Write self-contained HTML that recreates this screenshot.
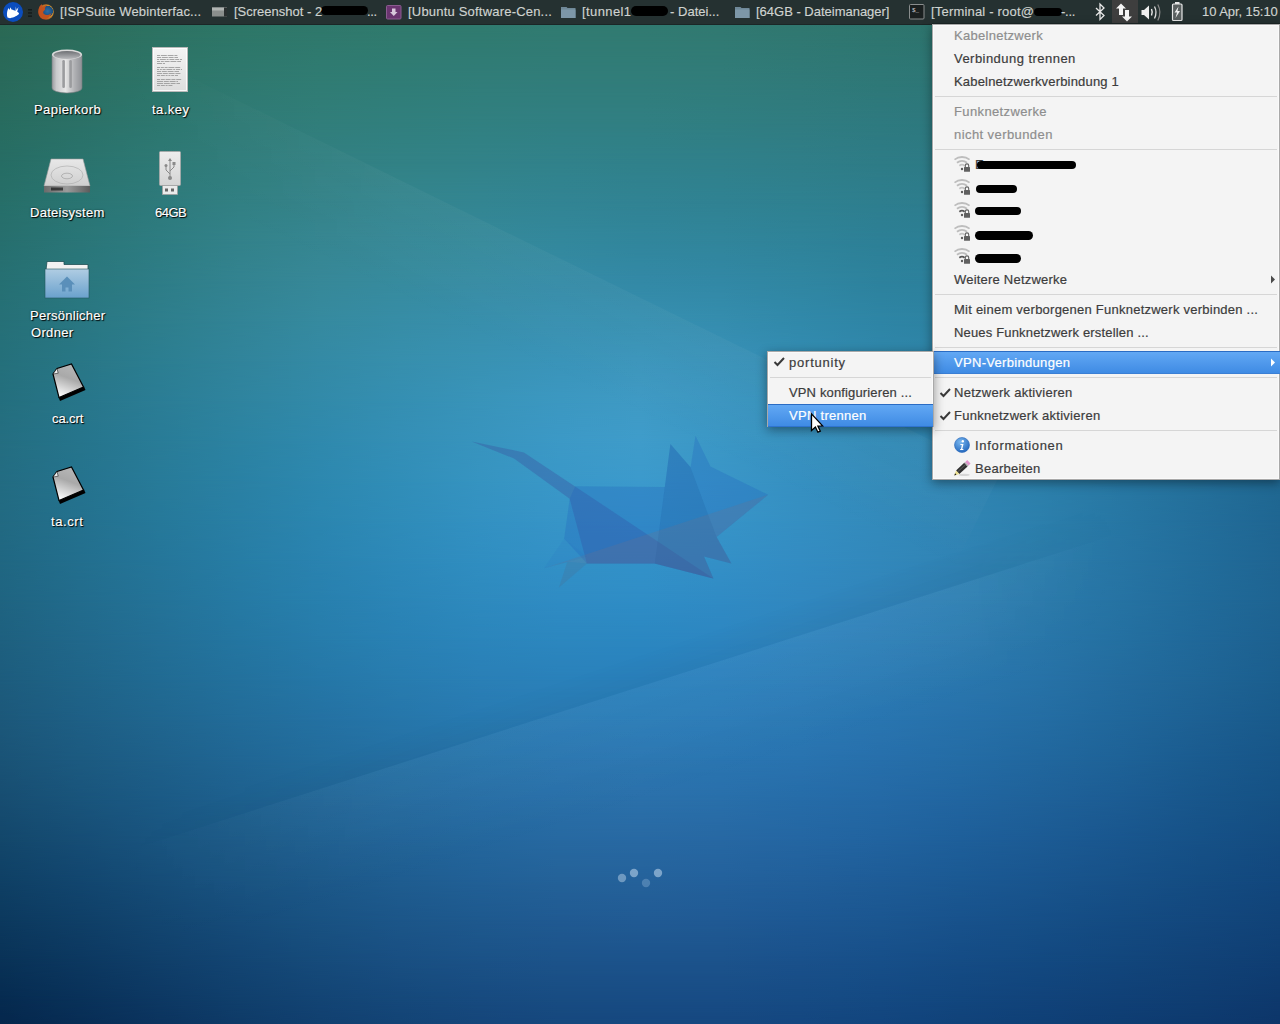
<!DOCTYPE html>
<html><head><meta charset="utf-8"><style>*{margin:0;padding:0;box-sizing:border-box}
html,body{width:1280px;height:1024px;overflow:hidden;background:#1e5f90;font-family:"Liberation Sans",sans-serif}
.s{position:absolute;left:0;width:1280px;height:40px}
.m{-webkit-mask-image:linear-gradient(to bottom,transparent,#000);mask-image:linear-gradient(to bottom,transparent,#000)}
.a{position:absolute}
#panel{position:absolute;left:0;top:0;width:1280px;height:25px;background:#253131;border-bottom:1px solid #1b2626}
.pt{position:absolute;top:0;height:24px;line-height:24px;font-size:13px;color:#cfd3d0;white-space:nowrap;-webkit-text-stroke:0.15px currentColor}
.menu{position:absolute;background:#f4f4f4;border:1px solid #a9a9a9;box-shadow:inset 1px 1px 0 #fafafa, inset -1px -1px 0 #fafafa}
.mi{position:absolute;height:23px;line-height:23px;font-size:13px;color:#3c3c3c;white-space:nowrap;-webkit-text-stroke:0.2px currentColor}
.dis{color:#8e8e8e}
.sep{position:absolute;height:1px;background:#d6d6d6}
.hl{position:absolute;background:linear-gradient(#62a8f4,#3f8be4);border-top:1px solid #2a6cc4;border-bottom:1px solid #3b7fd4}
.lbl{position:absolute;font-size:13px;line-height:17px;color:#fff;-webkit-text-stroke:0.15px #fff;text-shadow:1px 1px 1px #000,0 0 2px rgba(0,0,0,.6);white-space:nowrap}
</style></head><body>
<div class="s" style="top:0px;background:linear-gradient(to right,#2b6852 0px,#2c6c58 80px,#2d715e 160px,#2e7563 240px,#2f7767 320px,#2f7969 400px,#30796b 480px,#317a6c 560px,#31796c 640px,#31786c 720px,#30766b 800px,#2f746a 880px,#2e7268 960px,#2d7167 1040px,#2d7066 1120px,#2d6e65 1200px,#2c6c64 1280px)"></div>
<div class="s m" style="top:0px;background:linear-gradient(to right,#2a6956 0px,#2c6e5d 80px,#2d7364 160px,#2e7769 240px,#2f796d 320px,#307b6f 400px,#307b71 480px,#317b73 560px,#317b73 640px,#317a73 720px,#307872 800px,#2e7670 880px,#2d746f 960px,#2d736d 1040px,#2d726c 1120px,#2c706b 1200px,#2c6d6a 1280px)"></div>
<div class="s" style="top:40px;background:linear-gradient(to right,#2a6956 0px,#2c6e5d 80px,#2d7364 160px,#2e7769 240px,#2f796d 320px,#307b6f 400px,#307b71 480px,#317b73 560px,#317b73 640px,#317a73 720px,#307872 800px,#2e7670 880px,#2d746f 960px,#2d736d 1040px,#2d726c 1120px,#2c706b 1200px,#2c6d6a 1280px)"></div>
<div class="s m" style="top:40px;background:linear-gradient(to right,#296a5b 0px,#2b7062 80px,#2d7569 160px,#2f796f 240px,#307c73 320px,#307d76 400px,#317d79 480px,#317d7a 560px,#317d7a 640px,#317c7a 720px,#307a79 800px,#2e7877 880px,#2d7676 960px,#2d7574 1040px,#2d7373 1120px,#2c7171 1200px,#2c6f6f 1280px)"></div>
<div class="s" style="top:80px;background:linear-gradient(to right,#296a5b 0px,#2b7062 80px,#2d7569 160px,#2f796f 240px,#307c73 320px,#307d76 400px,#317d79 480px,#317d7a 560px,#317d7a 640px,#317c7a 720px,#307a79 800px,#2e7877 880px,#2d7676 960px,#2d7574 1040px,#2d7373 1120px,#2c7171 1200px,#2c6f6f 1280px)"></div>
<div class="s m" style="top:80px;background:linear-gradient(to right,#286c5f 0px,#2b7167 80px,#2d776f 160px,#307b76 240px,#317e7a 320px,#317f7d 400px,#318080 480px,#317f82 560px,#317f82 640px,#307e81 720px,#307c80 800px,#2e7a7f 880px,#2d787d 960px,#2d777c 1040px,#2c757a 1120px,#2c7378 1200px,#2b7075 1280px)"></div>
<div class="s" style="top:120px;background:linear-gradient(to right,#286c5f 0px,#2b7167 80px,#2d776f 160px,#307b76 240px,#317e7a 320px,#317f7d 400px,#318080 480px,#317f82 560px,#317f82 640px,#307e81 720px,#307c80 800px,#2e7a7f 880px,#2d787d 960px,#2d777c 1040px,#2c757a 1120px,#2c7378 1200px,#2b7075 1280px)"></div>
<div class="s m" style="top:120px;background:linear-gradient(to right,#276d64 0px,#2a736d 80px,#2e7975 160px,#317d7c 240px,#328082 320px,#328285 400px,#328288 480px,#31828a 560px,#30818a 640px,#30808a 720px,#307e88 800px,#2e7c86 880px,#2d7a85 960px,#2c7983 1040px,#2c7781 1120px,#2c757f 1200px,#2b717b 1280px)"></div>
<div class="s" style="top:160px;background:linear-gradient(to right,#276d64 0px,#2a736d 80px,#2e7975 160px,#317d7c 240px,#328082 320px,#328285 400px,#328288 480px,#31828a 560px,#30818a 640px,#30808a 720px,#307e88 800px,#2e7c86 880px,#2d7a85 960px,#2c7983 1040px,#2c7781 1120px,#2c757f 1200px,#2b717b 1280px)"></div>
<div class="s m" style="top:160px;background:linear-gradient(to right,#276f69 0px,#2a7572 80px,#2e7a7b 160px,#328083 240px,#348389 320px,#34858e 400px,#338591 480px,#328493 560px,#318393 640px,#308292 720px,#2f8190 800px,#2e7e8e 880px,#2d7c8c 960px,#2c7b8a 1040px,#2c7988 1120px,#2b7685 1200px,#2a7281 1280px)"></div>
<div class="s" style="top:200px;background:linear-gradient(to right,#276f69 0px,#2a7572 80px,#2e7a7b 160px,#328083 240px,#348389 320px,#34858e 400px,#338591 480px,#328493 560px,#318393 640px,#308292 720px,#2f8190 800px,#2e7e8e 880px,#2d7c8c 960px,#2c7b8a 1040px,#2c7988 1120px,#2b7685 1200px,#2a7281 1280px)"></div>
<div class="s m" style="top:200px;background:linear-gradient(to right,#276f6e 0px,#2a7678 80px,#2e7c81 160px,#33828a 240px,#368691 320px,#368896 400px,#35899a 480px,#33889c 560px,#31869c 640px,#31859b 720px,#2f8399 800px,#2d8096 880px,#2c7e94 960px,#2c7c91 1040px,#2b7a8f 1120px,#2b778a 1200px,#2a7385 1280px)"></div>
<div class="s" style="top:240px;background:linear-gradient(to right,#276f6e 0px,#2a7678 80px,#2e7c81 160px,#33828a 240px,#368691 320px,#368896 400px,#35899a 480px,#33889c 560px,#31869c 640px,#31859b 720px,#2f8399 800px,#2d8096 880px,#2c7e94 960px,#2c7c91 1040px,#2b7a8f 1120px,#2b778a 1200px,#2a7385 1280px)"></div>
<div class="s m" style="top:240px;background:linear-gradient(to right,#267073 0px,#2a777d 80px,#2e7d87 160px,#338390 240px,#378898 320px,#378b9e 400px,#378ca3 480px,#358ba6 560px,#3389a6 640px,#3288a5 720px,#3086a1 800px,#2d829d 880px,#2c809b 960px,#2c7e98 1040px,#2b7b94 1120px,#2a778f 1200px,#297289 1280px)"></div>
<div class="s" style="top:280px;background:linear-gradient(to right,#267073 0px,#2a777d 80px,#2e7d87 160px,#338390 240px,#378898 320px,#378b9e 400px,#378ca3 480px,#358ba6 560px,#3389a6 640px,#3288a5 720px,#3086a1 800px,#2d829d 880px,#2c809b 960px,#2c7e98 1040px,#2b7b94 1120px,#2a778f 1200px,#297289 1280px)"></div>
<div class="s m" style="top:280px;background:linear-gradient(to right,#267077 0px,#297782 80px,#2e7e8c 160px,#328496 240px,#368a9f 320px,#378da6 400px,#388fac 480px,#3890b0 560px,#368fb0 640px,#358dae 720px,#3189aa 800px,#2e85a5 880px,#2d82a1 960px,#2c7f9d 1040px,#2a7b99 1120px,#297692 1200px,#27718b 1280px)"></div>
<div class="s" style="top:320px;background:linear-gradient(to right,#267077 0px,#297782 80px,#2e7e8c 160px,#328496 240px,#368a9f 320px,#378da6 400px,#388fac 480px,#3890b0 560px,#368fb0 640px,#358dae 720px,#3189aa 800px,#2e85a5 880px,#2d82a1 960px,#2c7f9d 1040px,#2a7b99 1120px,#297692 1200px,#27718b 1280px)"></div>
<div class="s m" style="top:320px;background:linear-gradient(to right,#25707b 0px,#297786 80px,#2c7e91 160px,#31849b 240px,#348aa5 320px,#378fad 400px,#3992b3 480px,#3a94b9 560px,#3b95bb 640px,#3891b8 720px,#338cb2 800px,#3087ac 880px,#2e83a7 960px,#2c80a2 1040px,#2a7b9c 1120px,#277595 1200px,#256f8d 1280px)"></div>
<div class="s" style="top:360px;background:linear-gradient(to right,#25707b 0px,#297786 80px,#2c7e91 160px,#31849b 240px,#348aa5 320px,#378fad 400px,#3992b3 480px,#3a94b9 560px,#3b95bb 640px,#3891b8 720px,#338cb2 800px,#3087ac 880px,#2e83a7 960px,#2c80a2 1040px,#2a7b9c 1120px,#277595 1200px,#256f8d 1280px)"></div>
<div class="s m" style="top:360px;background:linear-gradient(to right,#246f7e 0px,#28768a 80px,#2b7d95 160px,#2f849f 240px,#328aa9 320px,#358fb2 400px,#3994ba 480px,#3c98c1 560px,#3f9ac4 640px,#3a95c0 720px,#358fb8 800px,#3189b2 880px,#2e85ac 960px,#2c80a6 1040px,#297a9f 1120px,#267397 1200px,#236c8e 1280px)"></div>
<div class="s" style="top:400px;background:linear-gradient(to right,#246f7e 0px,#28768a 80px,#2b7d95 160px,#2f849f 240px,#328aa9 320px,#358fb2 400px,#3994ba 480px,#3c98c1 560px,#3f9ac4 640px,#3a95c0 720px,#358fb8 800px,#3189b2 880px,#2e85ac 960px,#2c80a6 1040px,#297a9f 1120px,#267397 1200px,#236c8e 1280px)"></div>
<div class="s m" style="top:400px;background:linear-gradient(to right,#246e81 0px,#26758c 80px,#297c97 160px,#2c83a2 240px,#2f89ad 320px,#348fb6 400px,#3894be 480px,#3c99c6 560px,#3f9cca 640px,#3b97c5 720px,#3690be 800px,#328ab6 880px,#2f85af 960px,#2c80a9 1040px,#2879a1 1120px,#257198 1200px,#226a90 1280px)"></div>
<div class="s" style="top:440px;background:linear-gradient(to right,#246e81 0px,#26758c 80px,#297c97 160px,#2c83a2 240px,#2f89ad 320px,#348fb6 400px,#3894be 480px,#3c99c6 560px,#3f9cca 640px,#3b97c5 720px,#3690be 800px,#328ab6 880px,#2f85af 960px,#2c80a9 1040px,#2879a1 1120px,#257198 1200px,#226a90 1280px)"></div>
<div class="s m" style="top:440px;background:linear-gradient(to right,#236c82 0px,#25738e 80px,#287b99 160px,#2a81a4 240px,#2d88af 320px,#318eb8 400px,#3694c1 480px,#3a98c8 560px,#3c9acc 640px,#3a96c8 720px,#3690c1 800px,#338bb9 880px,#3085b2 960px,#2c80ab 1040px,#2878a3 1120px,#24709a 1200px,#206891 1280px)"></div>
<div class="s" style="top:480px;background:linear-gradient(to right,#236c82 0px,#25738e 80px,#287b99 160px,#2a81a4 240px,#2d88af 320px,#318eb8 400px,#3694c1 480px,#3a98c8 560px,#3c9acc 640px,#3a96c8 720px,#3690c1 800px,#338bb9 880px,#3085b2 960px,#2c80ab 1040px,#2878a3 1120px,#24709a 1200px,#206891 1280px)"></div>
<div class="s m" style="top:480px;background:linear-gradient(to right,#226a82 0px,#24718e 80px,#26799a 160px,#297fa5 240px,#2b86b0 320px,#2f8cb9 400px,#3391c2 480px,#3795c8 560px,#3897cb 640px,#3794c8 720px,#358fc2 800px,#338abb 880px,#3085b4 960px,#2c7fac 1040px,#2777a4 1120px,#236e9b 1200px,#1f6692 1280px)"></div>
<div class="s" style="top:520px;background:linear-gradient(to right,#226a82 0px,#24718e 80px,#26799a 160px,#297fa5 240px,#2b86b0 320px,#2f8cb9 400px,#3391c2 480px,#3795c8 560px,#3897cb 640px,#3794c8 720px,#358fc2 800px,#338abb 880px,#3085b4 960px,#2c7fac 1040px,#2777a4 1120px,#236e9b 1200px,#1f6692 1280px)"></div>
<div class="s m" style="top:520px;background:linear-gradient(to right,#206782 0px,#236f8e 80px,#25769a 160px,#277da5 240px,#2a83b0 320px,#2d89b9 400px,#308ec1 480px,#3391c7 560px,#3392c9 640px,#3490c7 720px,#338cc2 800px,#3288bb 880px,#3083b4 960px,#2c7dac 1040px,#2775a4 1120px,#226d9b 1200px,#1f6592 1280px)"></div>
<div class="s" style="top:560px;background:linear-gradient(to right,#206782 0px,#236f8e 80px,#25769a 160px,#277da5 240px,#2a83b0 320px,#2d89b9 400px,#308ec1 480px,#3391c7 560px,#3392c9 640px,#3490c7 720px,#338cc2 800px,#3288bb 880px,#3083b4 960px,#2c7dac 1040px,#2775a4 1120px,#226d9b 1200px,#1f6592 1280px)"></div>
<div class="s m" style="top:560px;background:linear-gradient(to right,#1f6481 0px,#226c8d 80px,#247398 160px,#267aa4 240px,#2880ae 320px,#2b85b7 400px,#2e8abe 480px,#2f8cc4 560px,#2f8dc6 640px,#308bc4 720px,#3188c0 800px,#3184ba 880px,#2f80b3 960px,#2b7aab 1040px,#2673a3 1120px,#216b9a 1200px,#1e6492 1280px)"></div>
<div class="s" style="top:600px;background:linear-gradient(to right,#1f6481 0px,#226c8d 80px,#247398 160px,#267aa4 240px,#2880ae 320px,#2b85b7 400px,#2e8abe 480px,#2f8cc4 560px,#2f8dc6 640px,#308bc4 720px,#3188c0 800px,#3184ba 880px,#2f80b3 960px,#2b7aab 1040px,#2673a3 1120px,#216b9a 1200px,#1e6492 1280px)"></div>
<div class="s m" style="top:600px;background:linear-gradient(to right,#1e607f 0px,#21688b 80px,#236f96 160px,#2476a1 240px,#277cab 320px,#2981b4 400px,#2b85bb 480px,#2c87bf 560px,#2b87c1 640px,#2d86c1 720px,#2f84bd 800px,#2f80b8 880px,#2d7cb1 960px,#2976a9 1040px,#2470a1 1120px,#206899 1200px,#1d6190 1280px)"></div>
<div class="s" style="top:640px;background:linear-gradient(to right,#1e607f 0px,#21688b 80px,#236f96 160px,#2476a1 240px,#277cab 320px,#2981b4 400px,#2b85bb 480px,#2c87bf 560px,#2b87c1 640px,#2d86c1 720px,#2f84bd 800px,#2f80b8 880px,#2d7cb1 960px,#2976a9 1040px,#2470a1 1120px,#206899 1200px,#1d6190 1280px)"></div>
<div class="s m" style="top:640px;background:linear-gradient(to right,#1d5c7d 0px,#1f6488 80px,#216b93 160px,#23719d 240px,#2577a7 320px,#287caf 400px,#2a7fb6 480px,#2a81ba 560px,#2a81bc 640px,#2c80bc 720px,#2d7eb9 800px,#2c7bb4 880px,#2a77ae 960px,#2772a7 1040px,#236b9e 1120px,#1f6596 1200px,#1b5e8e 1280px)"></div>
<div class="s" style="top:680px;background:linear-gradient(to right,#1d5c7d 0px,#1f6488 80px,#216b93 160px,#23719d 240px,#2577a7 320px,#287caf 400px,#2a7fb6 480px,#2a81ba 560px,#2a81bc 640px,#2c80bc 720px,#2d7eb9 800px,#2c7bb4 880px,#2a77ae 960px,#2772a7 1040px,#236b9e 1120px,#1f6596 1200px,#1b5e8e 1280px)"></div>
<div class="s m" style="top:680px;background:linear-gradient(to right,#1c587a 0px,#1e5f85 80px,#20668f 160px,#226c99 240px,#2471a2 320px,#2676aa 400px,#287ab1 480px,#2a7bb5 560px,#2a7cb7 640px,#2b7bb7 720px,#2b79b4 800px,#2975b0 880px,#2771aa 960px,#246da3 1040px,#20679b 1120px,#1d6093 1200px,#195a8b 1280px)"></div>
<div class="s" style="top:720px;background:linear-gradient(to right,#1c587a 0px,#1e5f85 80px,#20668f 160px,#226c99 240px,#2471a2 320px,#2676aa 400px,#287ab1 480px,#2a7bb5 560px,#2a7cb7 640px,#2b7bb7 720px,#2b79b4 800px,#2975b0 880px,#2771aa 960px,#246da3 1040px,#20679b 1120px,#1d6093 1200px,#195a8b 1280px)"></div>
<div class="s m" style="top:720px;background:linear-gradient(to right,#1a5376 0px,#1c5a80 80px,#1e608a 160px,#206694 240px,#226c9c 320px,#2570a4 400px,#2774aa 480px,#2975af 560px,#2b76b1 640px,#2a75b1 720px,#2973af 800px,#276fab 880px,#246ca5 960px,#21679e 1040px,#1e6297 1120px,#1a5b8f 1200px,#175588 1280px)"></div>
<div class="s" style="top:760px;background:linear-gradient(to right,#1a5376 0px,#1c5a80 80px,#1e608a 160px,#206694 240px,#226c9c 320px,#2570a4 400px,#2774aa 480px,#2975af 560px,#2b76b1 640px,#2a75b1 720px,#2973af 800px,#276fab 880px,#246ca5 960px,#21679e 1040px,#1e6297 1120px,#1a5b8f 1200px,#175588 1280px)"></div>
<div class="s m" style="top:760px;background:linear-gradient(to right,#174d71 0px,#19547b 80px,#1b5a85 160px,#1e608e 240px,#216596 320px,#236a9e 400px,#266da4 480px,#296fa8 560px,#2b70aa 640px,#296faa 720px,#266ca8 800px,#2469a5 880px,#2165a0 960px,#1f6199 1040px,#1c5c93 1120px,#18568b 1200px,#155184 1280px)"></div>
<div class="s" style="top:800px;background:linear-gradient(to right,#174d71 0px,#19547b 80px,#1b5a85 160px,#1e608e 240px,#216596 320px,#236a9e 400px,#266da4 480px,#296fa8 560px,#2b70aa 640px,#296faa 720px,#266ca8 800px,#2469a5 880px,#2165a0 960px,#1f6199 1040px,#1c5c93 1120px,#18568b 1200px,#155184 1280px)"></div>
<div class="s m" style="top:800px;background:linear-gradient(to right,#13476b 0px,#164d75 80px,#19547f 160px,#1c5a87 240px,#1e5f90 320px,#216397 400px,#24679d 480px,#2769a1 560px,#2869a3 640px,#2768a3 720px,#2466a2 800px,#21639f 880px,#1e5f9a 960px,#1c5b94 1040px,#19568e 1120px,#165187 1200px,#144c81 1280px)"></div>
<div class="s" style="top:840px;background:linear-gradient(to right,#13476b 0px,#164d75 80px,#19547f 160px,#1c5a87 240px,#1e5f90 320px,#216397 400px,#24679d 480px,#2769a1 560px,#2869a3 640px,#2768a3 720px,#2466a2 800px,#21639f 880px,#1e5f9a 960px,#1c5b94 1040px,#19568e 1120px,#165187 1200px,#144c81 1280px)"></div>
<div class="s m" style="top:840px;background:linear-gradient(to right,#0f4065 0px,#12466f 80px,#164d78 160px,#195381 240px,#1c5889 320px,#1f5d90 400px,#216096 480px,#246299 560px,#25629b 640px,#23619c 720px,#215f9a 800px,#1e5c97 880px,#1b5993 960px,#19558e 1040px,#175188 1120px,#144c82 1200px,#12477d 1280px)"></div>
<div class="s" style="top:880px;background:linear-gradient(to right,#0f4065 0px,#12466f 80px,#164d78 160px,#195381 240px,#1c5889 320px,#1f5d90 400px,#216096 480px,#246299 560px,#25629b 640px,#23619c 720px,#215f9a 800px,#1e5c97 880px,#1b5993 960px,#19558e 1040px,#175188 1120px,#144c82 1200px,#12477d 1280px)"></div>
<div class="s m" style="top:880px;background:linear-gradient(to right,#0c395e 0px,#0f3f67 80px,#134671 160px,#164c7a 240px,#195282 320px,#1c5689 400px,#1e598e 480px,#205a92 560px,#215b94 640px,#205a94 720px,#1d5893 800px,#1b5690 880px,#18528c 960px,#164f87 1040px,#144b82 1120px,#13477d 1200px,#114378 1280px)"></div>
<div class="s" style="top:920px;background:linear-gradient(to right,#0c395e 0px,#0f3f67 80px,#134671 160px,#164c7a 240px,#195282 320px,#1c5689 400px,#1e598e 480px,#205a92 560px,#215b94 640px,#205a94 720px,#1d5893 800px,#1b5690 880px,#18528c 960px,#164f87 1040px,#144b82 1120px,#13477d 1200px,#114378 1280px)"></div>
<div class="s m" style="top:920px;background:linear-gradient(to right,#093257 0px,#0c3860 80px,#103f6a 160px,#134573 240px,#164b7b 320px,#194f82 400px,#1b5287 480px,#1c538a 560px,#1c538c 640px,#1c538c 720px,#1a518b 800px,#174f89 880px,#154c85 960px,#134981 1040px,#12467c 1120px,#114277 1200px,#0f3e73 1280px)"></div>
<div class="s" style="top:960px;background:linear-gradient(to right,#093257 0px,#0c3860 80px,#103f6a 160px,#134573 240px,#164b7b 320px,#194f82 400px,#1b5287 480px,#1c538a 560px,#1c538c 640px,#1c538c 720px,#1a518b 800px,#174f89 880px,#154c85 960px,#134981 1040px,#12467c 1120px,#114277 1200px,#0f3e73 1280px)"></div>
<div class="s m" style="top:960px;background:linear-gradient(to right,#062b50 0px,#093159 80px,#0d3863 160px,#103f6c 240px,#134474 320px,#15487a 400px,#174a7f 480px,#184c82 560px,#184c84 640px,#184c85 720px,#164b84 800px,#144982 880px,#12467e 960px,#11437a 1040px,#104076 1120px,#0f3d72 1200px,#0e396d 1280px)"></div>
<div class="s" style="top:1000px;background:linear-gradient(to right,#062b50 0px,#093159 80px,#0d3863 160px,#103f6c 240px,#134474 320px,#15487a 400px,#174a7f 480px,#184c82 560px,#184c84 640px,#184c85 720px,#164b84 800px,#144982 880px,#12467e 960px,#11437a 1040px,#104076 1120px,#0f3d72 1200px,#0e396d 1280px)"></div>
<div class="s m" style="top:1000px;background:linear-gradient(to right,#04244a 0px,#072b53 80px,#0a315c 160px,#0d3865 240px,#103d6d 320px,#124173 400px,#144378 480px,#14457b 560px,#14457d 640px,#14457d 720px,#13447d 800px,#11427b 880px,#0f4077 960px,#0e3d74 1040px,#0d3b70 1120px,#0d386c 1200px,#0c3468 1280px)"></div>
<!-- wallpaper facets -->
<svg class="a" style="left:0;top:0" width="1280" height="1024" viewBox="0 0 1280 1024">
  <defs>
    <linearGradient id="fu" gradientUnits="userSpaceOnUse" x1="500" y1="229" x2="453" y2="325"><stop offset="0" stop-color="#fff" stop-opacity=".035"/><stop offset="1" stop-color="#fff" stop-opacity="0"/></linearGradient>
    <linearGradient id="fuh" gradientUnits="userSpaceOnUse" x1="120" y1="0" x2="380" y2="0"><stop offset="0" stop-color="#fff" stop-opacity="0"/><stop offset="1" stop-color="#fff" stop-opacity="1"/></linearGradient>
    <mask id="mu"><rect x="0" y="0" width="1280" height="1024" fill="url(#fuh)"/></mask>
    <linearGradient id="fl" gradientUnits="userSpaceOnUse" x1="640" y1="687" x2="674" y2="792"><stop offset="0" stop-color="#fff" stop-opacity=".035"/><stop offset="1" stop-color="#fff" stop-opacity="0"/></linearGradient>
    <linearGradient id="flh" gradientUnits="userSpaceOnUse" x1="120" y1="0" x2="1120" y2="0"><stop offset="0" stop-color="#fff" stop-opacity="0"/><stop offset=".25" stop-color="#fff" stop-opacity="1"/><stop offset=".85" stop-color="#fff" stop-opacity="1"/><stop offset="1" stop-color="#fff" stop-opacity="0"/></linearGradient>
    <mask id="ml"><rect x="0" y="0" width="1280" height="1024" fill="url(#flh)"/></mask>
    <linearGradient id="fld" gradientUnits="userSpaceOnUse" x1="640" y1="687" x2="630" y2="657"><stop offset="0" stop-color="#000" stop-opacity=".03"/><stop offset="1" stop-color="#000" stop-opacity="0"/></linearGradient>
  </defs>
  <polygon points="100,33 1000,474 950,576 50,135" fill="url(#fu)" mask="url(#mu)"/>
  <polygon points="120,853 1120,533 1160,650 160,970" fill="url(#fl)" mask="url(#ml)"/>
  <polygon points="120,853 1120,533 1110,503 110,823" fill="url(#fld)" mask="url(#ml)"/>
</svg>
<svg class="a" style="left:0;top:0" width="1280" height="1024" viewBox="0 0 1280 1024">
  <!-- mouse -->
  <polygon points="471.6,441.6 523.9,452.4 713.4,578.4 654.8,563.6 586.9,563.6 569.7,498.75 514,458.5" fill="#3a4c9c" opacity="0.34"/>
  <polygon points="575.2,486.25 665,487 654.8,563.6 586.9,563.6 564.2,538.6 569.7,498.75" fill="#2060c0" opacity="0.28"/>
  <polygon points="670.4,444.1 690.6,467.3 716.6,537 731.4,563.6 704,556.6 713.4,578.4 654.8,563.6" fill="#1a54a8" opacity="0.36"/>
  <polygon points="695.5,435.8 710.5,466.5 768.2,494.7 716.6,537 690.6,467.3" fill="#2060c0" opacity="0.28"/>
  <polygon points="768.2,494.7 543.9,568.3 567.3,562 586.9,563.6 654.8,563.6 713.4,578.4 704,556.6 731.4,563.6 716.6,537" fill="#707088" opacity="0.24"/>
  <polygon points="564.2,538.6 543.9,568.3 567.3,562 586.9,556.6" fill="#2a70c0" opacity="0.15"/>
  <polygon points="567.3,562 558.8,587.7 586.9,563.6" fill="#4a6a90" opacity="0.25"/>
  <!-- spinner dots -->
  <circle cx="622" cy="878" r="4.2" fill="#b8d0e6" opacity="0.5"/>
  <circle cx="634" cy="873" r="4.2" fill="#c4daee" opacity="0.55"/>
  <circle cx="646" cy="883" r="4.2" fill="#9cbcdc" opacity="0.35"/>
  <circle cx="658" cy="873" r="4.2" fill="#c4daee" opacity="0.55"/>
</svg>

<!-- ===== desktop icons ===== -->
<!-- trash -->
<svg class="a" style="left:50px;top:47px" width="34" height="48" viewBox="0 0 34 48">
  <defs>
    <linearGradient id="tg" x1="0" x2="1"><stop offset="0" stop-color="#9a9ca0"/><stop offset=".15" stop-color="#c9cacc"/><stop offset=".45" stop-color="#e6e6e6"/><stop offset=".75" stop-color="#b0b1b4"/><stop offset="1" stop-color="#8f9196"/></linearGradient>
    <linearGradient id="tg2" x1="0" x2="0" y1="0" y2="1"><stop offset="0" stop-color="#6e7074"/><stop offset="1" stop-color="#b8b9bc"/></linearGradient>
  </defs>
  <path d="M2,7.5 L2,41 A15,5 0 0 0 32,41 L32,7.5 Z" fill="url(#tg)" stroke="#7a7c80" stroke-width=".6"/>
  <ellipse cx="17" cy="7.5" rx="15" ry="5" fill="#dcdcdc"/>
  <ellipse cx="17" cy="8" rx="13.5" ry="4" fill="url(#tg2)"/>
  <rect x="12.3" y="13" width="2.6" height="28" rx="1.3" fill="#9b9c9f"/>
  <rect x="19.3" y="13" width="2.6" height="28" rx="1.3" fill="#9b9c9f"/>
</svg>
<!-- text doc -->
<svg class="a" style="left:152px;top:47px" width="37" height="46" viewBox="0 0 37 46">
  <defs><linearGradient id="dg" x1="0" x2="0" y1="0" y2="1"><stop offset="0" stop-color="#f4f4f4"/><stop offset="1" stop-color="#dedede"/></linearGradient></defs>
  <rect x=".5" y=".5" width="35" height="44" fill="url(#dg)" stroke="#b9b9b9"/>
  <rect x="1.5" y="1.5" width="33" height="42" fill="none" stroke="#fff" stroke-width=".8"/>
  <g fill="#9e9e9e">
<rect x="5.0" y="8" width="3.0" height=".9"/><rect x="8.8" y="8" width="6.0" height=".9"/><rect x="15.6" y="8" width="6.0" height=".9"/><rect x="22.4" y="8" width="3.0" height=".9"/>
<rect x="5.0" y="10" width="4.0" height=".9"/><rect x="9.8" y="10" width="6.0" height=".9"/><rect x="16.6" y="10" width="5.0" height=".9"/><rect x="22.4" y="10" width="3.6" height=".9"/>
<rect x="5.0" y="12" width="2.0" height=".9"/><rect x="7.8" y="12" width="6.0" height=".9"/><rect x="14.6" y="12" width="2.0" height=".9"/><rect x="17.4" y="12" width="5.0" height=".9"/><rect x="23.2" y="12" width="4.0" height=".9"/><rect x="28.0" y="12" width="2.0" height=".9"/>
<rect x="5.0" y="14" width="3.0" height=".9"/><rect x="8.8" y="14" width="3.0" height=".9"/><rect x="12.6" y="14" width="5.0" height=".9"/><rect x="18.4" y="14" width="6.0" height=".9"/><rect x="25.2" y="14" width="3.8" height=".9"/>
<rect x="5.0" y="16" width="5.0" height=".9"/><rect x="10.8" y="16" width="2.2" height=".9"/>
<rect x="5.0" y="20" width="3.0" height=".9"/><rect x="8.8" y="20" width="3.0" height=".9"/><rect x="12.6" y="20" width="3.0" height=".9"/><rect x="16.4" y="20" width="6.0" height=".9"/><rect x="23.2" y="20" width="5.0" height=".9"/>
<rect x="5.0" y="22" width="2.0" height=".9"/><rect x="7.8" y="22" width="2.0" height=".9"/><rect x="10.6" y="22" width="3.0" height=".9"/><rect x="14.4" y="22" width="6.0" height=".9"/><rect x="21.2" y="22" width="2.0" height=".9"/><rect x="24.0" y="22" width="4.0" height=".9"/><rect x="28.8" y="22" width="1.2" height=".9"/>
<rect x="5.0" y="24" width="4.0" height=".9"/><rect x="9.8" y="24" width="5.0" height=".9"/><rect x="15.6" y="24" width="6.0" height=".9"/><rect x="22.4" y="24" width="4.6" height=".9"/>
<rect x="5.0" y="26" width="5.0" height=".9"/><rect x="10.8" y="26" width="5.0" height=".9"/><rect x="16.6" y="26" width="6.0" height=".9"/><rect x="23.4" y="26" width="5.0" height=".9"/>
<rect x="5.0" y="28" width="3.0" height=".9"/><rect x="8.8" y="28" width="4.0" height=".9"/><rect x="13.6" y="28" width="2.0" height=".9"/><rect x="16.4" y="28" width="2.0" height=".9"/><rect x="19.2" y="28" width="3.0" height=".9"/><rect x="23.0" y="28" width="3.0" height=".9"/>
<rect x="5.0" y="32" width="3.0" height=".9"/><rect x="8.8" y="32" width="4.0" height=".9"/><rect x="13.6" y="32" width="5.0" height=".9"/><rect x="19.4" y="32" width="4.0" height=".9"/><rect x="24.2" y="32" width="5.0" height=".9"/>
<rect x="5.0" y="34" width="6.0" height=".9"/><rect x="11.8" y="34" width="5.0" height=".9"/><rect x="17.6" y="34" width="6.0" height=".9"/><rect x="24.4" y="34" width="1.6" height=".9"/>
<rect x="5.0" y="36" width="6.0" height=".9"/><rect x="11.8" y="36" width="6.0" height=".9"/><rect x="18.6" y="36" width="5.0" height=".9"/><rect x="24.4" y="36" width="3.6" height=".9"/>
<rect x="5.0" y="38" width="3.0" height=".9"/><rect x="8.8" y="38" width="4.0" height=".9"/><rect x="13.6" y="38" width="2.0" height=".9"/><rect x="16.4" y="38" width="4.0" height=".9"/>
  </g>
</svg>
<!-- hdd -->
<svg class="a" style="left:43px;top:158px" width="48" height="36" viewBox="0 0 48 36">
  <defs>
    <linearGradient id="hg" x1="0" x2="0" y1="0" y2="1"><stop offset="0" stop-color="#e8e8e8"/><stop offset="1" stop-color="#cfcfcf"/></linearGradient>
    <linearGradient id="hf" x1="0" x2="1"><stop offset="0" stop-color="#6a6a6a"/><stop offset=".5" stop-color="#9c9c9c"/><stop offset="1" stop-color="#5c5c5c"/></linearGradient>
  </defs>
  <polygon points="8,1 40,1 47,28 1,28" fill="url(#hg)" stroke="#9a9a9a" stroke-width=".6"/>
  <rect x="1" y="28" width="46" height="6.5" fill="url(#hf)"/>
  <rect x="8" y="29.5" width="12" height="3" fill="#1a1a1a" opacity=".7"/>
  <ellipse cx="24" cy="17" rx="16" ry="9" fill="none" stroke="#b0b0b0" stroke-width=".7"/>
  <ellipse cx="24" cy="18" rx="5.5" ry="2.8" fill="none" stroke="#a0a0a0" stroke-width=".7"/>
</svg>
<!-- usb -->
<svg class="a" style="left:158px;top:150px" width="24" height="46" viewBox="0 0 24 46">
  <defs><linearGradient id="ug" x1="0" x2="0" y1="0" y2="1"><stop offset="0" stop-color="#ededed"/><stop offset="1" stop-color="#d4d4d4"/></linearGradient></defs>
  <rect x="1.5" y="1.5" width="21" height="34" rx="1" fill="url(#ug)" stroke="#a8a8a8" stroke-width=".8"/>
  <rect x="4.5" y="35.5" width="15" height="9" fill="#eaeaea" stroke="#a0a0a0" stroke-width=".8"/>
  <rect x="7" y="38.5" width="3" height="3" fill="#666"/><rect x="13" y="38.5" width="3" height="3" fill="#666"/>
  <g stroke="#8a8a8a" stroke-width="1" fill="none"><path d="M12,9 V27"/><path d="M12,24 L8,20 V16"/><path d="M12,21 L16,17 V14"/></g>
  <g fill="#8a8a8a"><path d="M10,11 L12,8 L14,11Z"/><circle cx="12" cy="28" r="2"/><circle cx="8" cy="15.5" r="1.5"/><rect x="14.5" y="12" width="3" height="3"/></g>
</svg>
<!-- home folder -->
<svg class="a" style="left:44px;top:260px" width="46" height="40" viewBox="0 0 46 40">
  <defs><linearGradient id="fg" x1="0" x2="0" y1="0" y2="1"><stop offset="0" stop-color="#b0cde3"/><stop offset="1" stop-color="#6aa1cd"/></linearGradient></defs>
  <path d="M3,1.5 H20 V4.5 H44 V10 H2 Z" fill="#f2f2f2" stroke="#1f4f56" stroke-width=".8" opacity="1"/>
  <rect x="1" y="9" width="44" height="29" fill="url(#fg)" stroke="#24585e" stroke-width=".6"/>
  <path d="M23,16.5 L15,24.5 H18 V31.5 H21.5 V27.5 H24.5 V31.5 H28 V24.5 H31 Z" fill="#5a8fba"/>
</svg>
<!-- certificates -->
<svg class="a" style="left:50px;top:362px" width="38" height="40" viewBox="0 0 38 40">
  <defs><linearGradient id="cg" x1=".6" x2=".3" y1="0.1" y2="1"><stop offset="0" stop-color="#b4b4b4"/><stop offset=".35" stop-color="#a9a9a9"/><stop offset="1" stop-color="#ffffff"/></linearGradient></defs>
  <polygon points="8.5,35 34,24.5 35.5,28 10,39" fill="#000"/>
  <polygon points="3,12 7,6.5 21.5,2 33.5,25 9,35.5" fill="url(#cg)" stroke="#000" stroke-width="1.2"/>
  <path d="M3,12 L7,6.5 L8.2,11.2 Z" fill="#f0f0f0" stroke="#000" stroke-width=".5"/>
</svg>
<svg class="a" style="left:50px;top:465px" width="38" height="40" viewBox="0 0 38 40">
  <polygon points="8.5,35 34,24.5 35.5,28 10,39" fill="#000"/>
  <polygon points="3,12 7,6.5 21.5,2 33.5,25 9,35.5" fill="url(#cg)" stroke="#000" stroke-width="1.2"/>
  <path d="M3,12 L7,6.5 L8.2,11.2 Z" fill="#f0f0f0" stroke="#000" stroke-width=".5"/>
</svg>

<!-- desktop labels -->
<div class="lbl" style="left:34px;top:101px;letter-spacing:0.42px">Papierkorb</div>
<div class="lbl" style="left:152px;top:101px;letter-spacing:0.44px">ta.key</div>
<div class="lbl" style="left:30px;top:204px;letter-spacing:0.28px">Dateisystem</div>
<div class="lbl" style="left:155px;top:204px;letter-spacing:-0.53px">64GB</div>
<div class="lbl" style="left:30px;top:307px;letter-spacing:0.26px">Persönlicher</div>
<div class="lbl" style="left:31px;top:324px;letter-spacing:0.32px">Ordner</div>
<div class="lbl" style="left:52px;top:410px;letter-spacing:-0.08px">ca.crt</div>
<div class="lbl" style="left:51px;top:513px;letter-spacing:0.60px">ta.crt</div>

<!-- ===== panel ===== -->
<div id="panel"></div>
<svg class="a" style="left:0;top:0" width="60" height="24" viewBox="0 0 60 24">
  <circle cx="13" cy="12" r="10" fill="#0b4dbd"/>
  <path d="M7.5,17.5 C6.5,15 7,11.5 7.8,9.5 L8.5,8 L9.5,10 L10.5,7.3 L11.5,9.5 C13,9.8 14.5,10.5 15.5,11 L15.8,6.5 L16.5,10 L18.5,7 L17.2,11.8 C18.5,12.5 19,13 19,13.8 C18,15.5 14,17.5 10,18.2 Z" fill="#fff"/>
  <rect x="28" y="9" width="4" height="1.5" fill="#141b1b"/><rect x="28" y="12.2" width="4" height="1.5" fill="#141b1b"/><rect x="28" y="15.4" width="4" height="1.5" fill="#141b1b"/>
  <defs><radialGradient id="ffg" cx=".6" cy=".45" r=".6"><stop offset="0" stop-color="#2a6ea8"/><stop offset=".55" stop-color="#1a4e80"/><stop offset=".6" stop-color="#c89030"/><stop offset="1" stop-color="#a04018"/></radialGradient></defs>
  <circle cx="46" cy="12" r="7.8" fill="url(#ffg)"/>
  <path d="M38.5,10 C39,6 41,4.5 42,4.2 L42.5,7 C44,5.5 46,5 47.5,5.2 C45.5,6 44.5,8 45,10 C43.5,10.5 42.5,12.5 44,14 C45.5,15.5 49,15.5 51.5,13 C50.5,17 47,19.5 43.5,19 C40,18.5 38,14.5 38.5,10Z" fill="#c0521f"/>
</svg>
<svg class="a" style="left:211px;top:6px" width="18" height="12" viewBox="0 0 18 12">
  <rect x="1" y="1.5" width="15" height="9" fill="#8a8e8c"/><rect x="1" y="1.5" width="15" height="3" fill="#b0b4b2"/><rect x="13" y="1.5" width="3" height="9" fill="#2a2f2f"/>
</svg>
<svg class="a" style="left:386px;top:5px" width="16" height="15" viewBox="0 0 16 15">
  <rect x=".5" y=".5" width="14.5" height="13.5" rx="1" fill="#6a3470" stroke="#8a5c90"/>
  <path d="M6,3.5 H9.5 V7 H11.5 L7.75,11 L4,7 H6 Z" fill="#d8c8dc"/>
</svg>
<svg class="a" style="left:560px;top:5px" width="17" height="14" viewBox="0 0 17 14">
  <path d="M1,2 H6.5 L7.5,3 H15.5 V13 H1 Z" fill="#6f8898"/><rect x="1" y="4.5" width="14.5" height="8.5" fill="#7d97a8"/>
</svg>
<svg class="a" style="left:734px;top:5px" width="17" height="14" viewBox="0 0 17 14">
  <path d="M1,2 H6.5 L7.5,3 H15.5 V13 H1 Z" fill="#6f8898"/><rect x="1" y="4.5" width="14.5" height="8.5" fill="#7d97a8"/>
</svg>
<svg class="a" style="left:909px;top:4px" width="16" height="16" viewBox="0 0 16 16">
  <rect x=".5" y=".5" width="14.5" height="14.5" rx="1" fill="#1a1f1f" stroke="#8a8e8e"/>
  <text x="3" y="8" font-size="6" fill="#ddd" font-family="Liberation Mono">$_</text>
</svg>
<!-- redaction blobs in panel -->
<div class="a" style="left:321px;top:6px;width:47px;height:9px;border-radius:5px;background:#000"></div>
<div class="a" style="left:631px;top:6px;width:37px;height:10px;border-radius:5px;background:#000"></div>
<div class="a" style="left:1034px;top:8px;width:28px;height:8px;border-radius:4px;background:#000"></div>
<div class="pt" style="left:60px;top:0px;letter-spacing:0.15px">[ISPSuite Webinterfac...</div>
<div class="pt" style="left:234px;top:0px">[Screenshot - 2</div>
<div class="pt" style="left:367px;top:0px;letter-spacing:-0.40px">...</div>
<div class="pt" style="left:408px;top:0px;letter-spacing:0.20px">[Ubuntu Software-Cen...</div>
<div class="pt" style="left:582px;top:0px;letter-spacing:0.40px">[tunnel1</div>
<div class="pt" style="left:670px;top:0px;letter-spacing:0.02px">- Datei...</div>
<div class="pt" style="left:756px;top:0px;letter-spacing:-0.01px">[64GB - Dateimanager]</div>
<div class="pt" style="left:931px;top:0px;letter-spacing:0.19px">[Terminal - root@</div>
<div class="pt" style="left:1061px;top:0px;letter-spacing:-0.27px">-...</div>
<div class="pt" style="left:1202px;top:0px;letter-spacing:-0.07px">10 Apr, 15:10</div>
<!-- tray -->
<svg class="a" style="left:1092px;top:0" width="100" height="24" viewBox="0 0 100 24">
  <path d="M4,8 L12,15.5 L8,19.5 V4 L12,8 L4,15.5" fill="none" stroke="#e8e8e8" stroke-width="1.3"/>
  <rect x="20" y="0" width="26" height="24" fill="#3e3e3e"/>
  <path d="M24,8.5 L29,3.5 L34,8.5 H31 V15 H27 V8.5 Z" fill="#f4f4f4"/>
  <path d="M33,10 H37 V16.5 H40 L35,21.5 L30,16.5 H33 Z" fill="#f4f4f4"/>
  <path d="M49.5,10 H52 L57,5.5 V19.5 L52,15 H49.5 Z" fill="#eee"/>
  <path d="M59.5,9 Q61,12.3 59.5,15.5" fill="none" stroke="#eee" stroke-width="1.4"/>
  <path d="M62.5,6.5 Q65.5,12.3 62.5,18.5" fill="none" stroke="#ddd" stroke-width="1.3"/>
  <path d="M65.8,4.5 Q70,12.3 65.8,20.5" fill="none" stroke="#8a8a8a" stroke-width="1.2"/>
  <rect x="80.5" y="4" width="9.5" height="16.5" rx="1" fill="#5a6060" stroke="#e8e8e8" stroke-width="1.2"/>
  <rect x="83" y="2" width="4.5" height="2" fill="#e8e8e8"/>
  <path d="M86.5,6.5 L82.5,12.5 H85 L83.5,18 L88,11 H85.5 Z" fill="#eee"/>
</svg>

<!-- ===== main menu ===== -->
<div class="a" style="left:932px;top:23px;width:348px;height:1px;background:#1b2626"></div>
<div class="menu" style="left:932px;top:24px;width:348px;height:456px;box-shadow:inset 1px 1px 0 #fafafa, inset -1px -1px 0 #fafafa, 0 3px 10px rgba(0,0,0,.4)"></div>
<div class="sep" style="left:935px;top:96px;width:342px"></div>
<div class="sep" style="left:935px;top:149px;width:342px"></div>
<!-- wifi items -->
<svg class="a" style="left:954px;top:156px" width="17" height="116" viewBox="0 0 17 116">
  <defs>
    <g id="wf">
      <path d="M0.45,3.67 A12,12 0 0 1 15.55,3.67" fill="none" stroke="#bdbdbd" stroke-width="1.8"/>
      <path d="M2.97,6.78 A8,8 0 0 1 13.03,6.78" fill="none" stroke="#bdbdbd" stroke-width="1.8"/>
      <circle cx="8" cy="13" r="1.2" fill="#5e5e5e"/>
      <rect x="10" y="11" width="6" height="4.8" rx=".6" fill="#606060"/>
      <path d="M11.3,11.5 V9.6 A1.7,1.7 0 0 1 14.7,9.6 V11.5" fill="none" stroke="#606060" stroke-width="1.1"/>
    </g>
    <path id="wi" d="M5.36,9.74 A4.2,4.2 0 0 1 10.64,9.74" fill="none" stroke-width="1.8"/>
  </defs>
  <use href="#wi" stroke="#c4c4c4"/><use href="#wf"/>
  <use href="#wi" y="23" stroke="#c4c4c4"/><use href="#wf" y="23"/>
  <use href="#wi" y="46" stroke="#555"/><use href="#wf" y="46"/>
  <use href="#wi" y="69" stroke="#c4c4c4"/><use href="#wf" y="69"/>
  <use href="#wi" y="92" stroke="#555"/><use href="#wf" y="92"/>
</svg>
<div class="mi" style="left:975px;top:153px">E</div>
<div class="a" style="left:977px;top:161px;width:99px;height:8px;border-radius:4px;background:#000"></div>
<div class="a" style="left:976px;top:185px;width:41px;height:8px;border-radius:4px;background:#000"></div>
<div class="a" style="left:975px;top:207px;width:46px;height:8px;border-radius:4px;background:#000"></div>
<div class="a" style="left:975px;top:231px;width:58px;height:9px;border-radius:4.5px;background:#000"></div>
<div class="a" style="left:975px;top:254px;width:46px;height:9px;border-radius:4.5px;background:#000"></div>
<svg class="a" style="left:1270px;top:275px" width="6" height="9" viewBox="0 0 6 9"><path d="M1,0.5 L5,4.5 L1,8.5Z" fill="#4a4a4a"/></svg>
<div class="sep" style="left:935px;top:294px;width:342px"></div>
<div class="sep" style="left:935px;top:347px;width:342px"></div>
<div class="hl" style="left:933px;top:351px;width:347px;height:23px"></div>
<svg class="a" style="left:1270px;top:358px" width="6" height="9" viewBox="0 0 6 9"><path d="M1,0.5 L5,4.5 L1,8.5Z" fill="#fff"/></svg>
<div class="sep" style="left:935px;top:377px;width:342px"></div>
<svg class="a" style="left:939px;top:387px" width="13" height="35" viewBox="0 0 13 35">
  <path d="M1.5,6 L4.5,9 L11,2" fill="none" stroke="#3a3a3a" stroke-width="2"/>
  <path d="M1.5,29 L4.5,32 L11,25" fill="none" stroke="#3a3a3a" stroke-width="2"/>
</svg>
<div class="sep" style="left:935px;top:430px;width:342px"></div>
<svg class="a" style="left:954px;top:437px" width="19" height="40" viewBox="0 0 19 40">
  <defs><radialGradient id="ig" cx=".4" cy=".3" r=".8"><stop offset="0" stop-color="#7ab8f0"/><stop offset="1" stop-color="#1a5fb8"/></radialGradient></defs>
  <circle cx="8" cy="8" r="7.5" fill="url(#ig)" stroke="#2a68b8" stroke-width=".6"/>
  <circle cx="8.8" cy="4.3" r="1.2" fill="#fff"/>
  <path d="M6.5,7 H9.5 L8.3,12 H9.5 L9.2,13 H6 L6.3,12 H7 L7.8,8 H6.3 Z" fill="#fff"/>
  <g transform="translate(0.3,38.4) scale(0.93) translate(-0.3,-38.4)">
  <ellipse cx="11" cy="37.8" rx="6" ry="1.3" fill="#000" opacity=".12"/>
  <polygon points="2.2,33.08 10.99,24.9 14.53,28.7 5.74,36.9" fill="#2f2f2f"/>
  <polygon points="3.5,34.2 12.2,26.1 13,27 4.3,35.1" fill="#555"/>
  <polygon points="10.99,24.9 12.09,23.87 15.63,27.68 14.53,28.7" fill="#a8a8a8"/>
  <polygon points="12.09,23.87 14.22,21.9 17.76,25.7 15.63,27.68" fill="#e094cc"/>
  <polygon points="0.3,38.4 2.2,33.08 5.74,36.9" fill="#ece08e"/>
  <polygon points="0.3,38.4 1.1,36.2 2.6,37.7" fill="#1e1e1e"/>
  </g>
</svg>

<div class="mi dis" style="left:954px;top:24px;letter-spacing:0.28px">Kabelnetzwerk</div>
<div class="mi" style="left:954px;top:47px;letter-spacing:0.46px">Verbindung trennen</div>
<div class="mi" style="left:954px;top:70px;letter-spacing:0.18px">Kabelnetzwerkverbindung 1</div>
<div class="mi dis" style="left:954px;top:100px;letter-spacing:0.37px">Funknetzwerke</div>
<div class="mi dis" style="left:954px;top:123px;letter-spacing:0.42px">nicht verbunden</div>
<div class="mi" style="left:954px;top:268px;letter-spacing:0.21px">Weitere Netzwerke</div>
<div class="mi" style="left:954px;top:298px;letter-spacing:0.24px">Mit einem verborgenen Funknetzwerk verbinden ...</div>
<div class="mi" style="left:954px;top:321px;letter-spacing:0.17px">Neues Funknetzwerk erstellen ...</div>
<div class="mi" style="left:954px;top:351px;letter-spacing:0.31px;color:#fff">VPN-Verbindungen</div>
<div class="mi" style="left:954px;top:381px;letter-spacing:0.27px">Netzwerk aktivieren</div>
<div class="mi" style="left:954px;top:404px;letter-spacing:0.27px">Funknetzwerk aktivieren</div>
<div class="mi" style="left:975px;top:434px;letter-spacing:0.69px">Informationen</div>
<div class="mi" style="left:975px;top:457px;letter-spacing:0.25px">Bearbeiten</div>
<!-- ===== submenu ===== -->
<div class="menu" style="left:767px;top:351px;width:167px;height:76px;box-shadow:inset 1px 1px 0 #fafafa, inset -1px -1px 0 #fafafa, 0 3px 10px rgba(0,0,0,.4)"></div>
<svg class="a" style="left:773px;top:356px" width="13" height="12" viewBox="0 0 13 12">
  <path d="M1.5,6 L4.5,9 L11,2" fill="none" stroke="#3a3a3a" stroke-width="2"/>
</svg>
<div class="sep" style="left:770px;top:377px;width:161px"></div>
<div class="hl" style="left:768px;top:404px;width:165px;height:23px;border-bottom-color:#2f74d0"></div>

<div class="mi" style="left:789px;top:351px;letter-spacing:0.78px">portunity</div>
<div class="mi" style="left:789px;top:381px;letter-spacing:0.14px">VPN konfigurieren ...</div>
<div class="mi" style="left:789px;top:404px;letter-spacing:0.29px;color:#fff">VPN trennen</div>
<!-- cursor -->
<svg class="a" style="left:809px;top:411px" width="16" height="24" viewBox="0 0 16 24">
  <path d="M2.5,2.8 L2.5,19.6 L6.4,16 L8.9,21.2 L11.3,20.2 L8.9,15.1 L13.6,14.9 Z" fill="#fff" stroke="#000" stroke-width="1.3" stroke-linejoin="miter"/>
</svg>

</body></html>
